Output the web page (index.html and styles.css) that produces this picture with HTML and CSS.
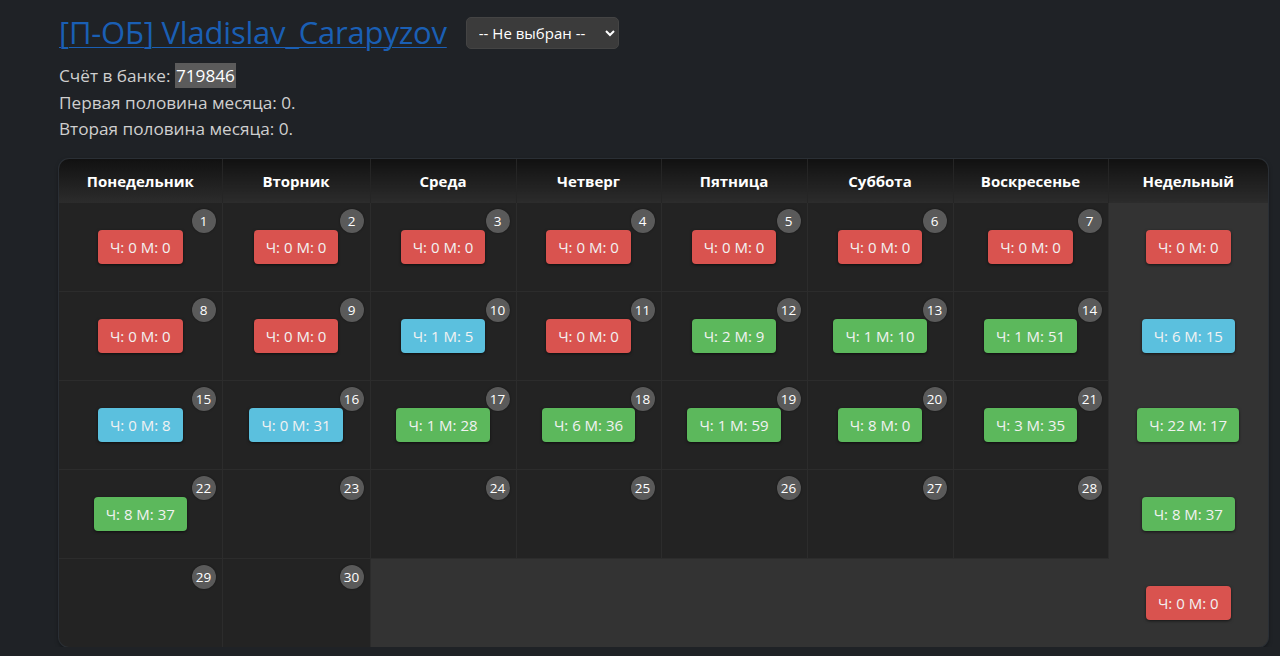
FILE: index.html
```html
<!DOCTYPE html>
<html lang="ru">
<head>
<meta charset="utf-8">
<title>Календарь</title>
<link rel="stylesheet" href="styles.css">
</head>
<body>
<div class="page">
  <div class="top">
    <a class="title" href="#">[П-ОБ] Vladislav_Carapyzov</a>
    <select class="picker"><option>-- Не выбран --</option></select>
  </div>
  <div class="info">
    <div>Счёт в банке: <span class="hl">719846</span></div>
    <div>Первая половина месяца: 0.</div>
    <div>Вторая половина месяца: 0.</div>
  </div>
  <div class="cal">
    <table>
      <colgroup>
        <col style="width:163px"><col style="width:148px"><col style="width:146px"><col style="width:145px"><col style="width:146px"><col style="width:146px"><col style="width:155px"><col style="width:160px">
      </colgroup>
      <thead>
        <tr><th>Понедельник</th><th>Вторник</th><th>Среда</th><th>Четверг</th><th>Пятница</th><th>Суббота</th><th>Воскресенье</th><th>Недельный</th></tr>
      </thead>
      <tbody>
        <tr>
          <td><span class="day">1</span><span class="lbl red">Ч: 0 М: 0</span></td>
          <td><span class="day">2</span><span class="lbl red">Ч: 0 М: 0</span></td>
          <td><span class="day">3</span><span class="lbl red">Ч: 0 М: 0</span></td>
          <td><span class="day">4</span><span class="lbl red">Ч: 0 М: 0</span></td>
          <td><span class="day">5</span><span class="lbl red">Ч: 0 М: 0</span></td>
          <td><span class="day">6</span><span class="lbl red">Ч: 0 М: 0</span></td>
          <td><span class="day">7</span><span class="lbl red">Ч: 0 М: 0</span></td>
          <td class="week"><span class="lbl red">Ч: 0 М: 0</span></td>
        </tr>
        <tr>
          <td><span class="day">8</span><span class="lbl red">Ч: 0 М: 0</span></td>
          <td><span class="day">9</span><span class="lbl red">Ч: 0 М: 0</span></td>
          <td><span class="day">10</span><span class="lbl blue">Ч: 1 М: 5</span></td>
          <td><span class="day">11</span><span class="lbl red">Ч: 0 М: 0</span></td>
          <td><span class="day">12</span><span class="lbl green">Ч: 2 М: 9</span></td>
          <td><span class="day">13</span><span class="lbl green">Ч: 1 М: 10</span></td>
          <td><span class="day">14</span><span class="lbl green">Ч: 1 М: 51</span></td>
          <td class="week"><span class="lbl blue">Ч: 6 М: 15</span></td>
        </tr>
        <tr>
          <td><span class="day">15</span><span class="lbl blue">Ч: 0 М: 8</span></td>
          <td><span class="day">16</span><span class="lbl blue">Ч: 0 М: 31</span></td>
          <td><span class="day">17</span><span class="lbl green">Ч: 1 М: 28</span></td>
          <td><span class="day">18</span><span class="lbl green">Ч: 6 М: 36</span></td>
          <td><span class="day">19</span><span class="lbl green">Ч: 1 М: 59</span></td>
          <td><span class="day">20</span><span class="lbl green">Ч: 8 М: 0</span></td>
          <td><span class="day">21</span><span class="lbl green">Ч: 3 М: 35</span></td>
          <td class="week"><span class="lbl green">Ч: 22 М: 17</span></td>
        </tr>
        <tr>
          <td><span class="day">22</span><span class="lbl green">Ч: 8 М: 37</span></td>
          <td><span class="day">23</span></td>
          <td><span class="day">24</span></td>
          <td><span class="day">25</span></td>
          <td><span class="day">26</span></td>
          <td><span class="day">27</span></td>
          <td><span class="day">28</span></td>
          <td class="week"><span class="lbl green">Ч: 8 М: 37</span></td>
        </tr>
        <tr>
          <td><span class="day">29</span></td>
          <td><span class="day">30</span></td>
          <td class="blank" colspan="5"></td>
          <td class="week"><span class="lbl red">Ч: 0 М: 0</span></td>
        </tr>
      </tbody>
    </table>
  </div>
</div>
</body>
</html>
```

FILE: styles.css
```css
html, body {
  margin: 0;
  padding: 0;
  background: #1f2226;
  font-family: "Open Sans", "Noto Sans", sans-serif;
  color: #d0d0d0;
}
.page {
  padding: 8px 12px 0 59px;
}
.top {
  display: flex;
  align-items: center;
  gap: 19px;
  height: 48px;
}
.title {
  font-size: 31px;
  color: #1a5fb4;
  text-decoration: underline;
  text-underline-offset: 3px;
  text-decoration-thickness: 1px;
  letter-spacing: -0.2px;
  line-height: 40px;
}
.picker {
  height: 32px;
  width: 153px;
  background: #3b3b3b;
  color: #fff;
  border: 1px solid #444;
  border-radius: 5px;
  font-family: "Open Sans", "Noto Sans", sans-serif;
  font-size: 15px;
  padding: 0 6px 0 8px;
  margin-top: 2px;
}
.info {
  margin-top: 7px;
  font-size: 17.2px;
  line-height: 26.5px;
  color: #cfcfcf;
}
.hl {
  background: #5b5b5b;
  color: #fff;
  padding: 1px 1px;
}
.cal {
  margin-top: 16px;
  width: 1209px;
  border-radius: 10px;
  overflow: hidden;
  box-shadow: 0 0 0 1px #2a2f35, 0 2px 4px rgba(0,0,0,0.5);
  background: #333;
}
table {
  border-collapse: collapse;
  table-layout: fixed;
  width: 1209px;
}
th {
  height: 44px;
  padding: 0;
  color: #fff;
  font-size: 15px;
  font-weight: 700;
  background: linear-gradient(#111, #2c2c2c);
  border-right: 1px solid #252525;
}
th:last-child { border-right: none; }
td {
  position: relative;
  height: 88px;
  padding: 0;
  text-align: center;
  vertical-align: middle;
  background: #232323;
  border: 1px solid #2c2c2c;
}
tbody tr:first-child td { border-top: none; }
td:first-child { border-left: none; }
td.week, td.blank {
  background: #333;
  border-color: #333;
}
td.week { border-right: none; }
tbody tr:last-child td { border-bottom: none; }
.day {
  position: absolute;
  top: 6px;
  right: 6px;
  width: 24px;
  height: 24px;
  border-radius: 50%;
  background: #5a5a5a;
  color: #fff;
  font-size: 13.5px;
  line-height: 24px;
  text-align: center;
  box-shadow: 0 0 2px rgba(0,0,0,0.5);
}
.lbl {
  display: inline-block;
  padding: 0 12px;
  height: 34px;
  line-height: 34px;
  border-radius: 4px;
  font-size: 15px;
  color: #f2f2f2;
  box-shadow: 0 1px 3px rgba(0,0,0,0.6);
}
.red { background: #d9534f; }
.blue { background: #5bc0de; }
.green { background: #5cb85c; }
```
